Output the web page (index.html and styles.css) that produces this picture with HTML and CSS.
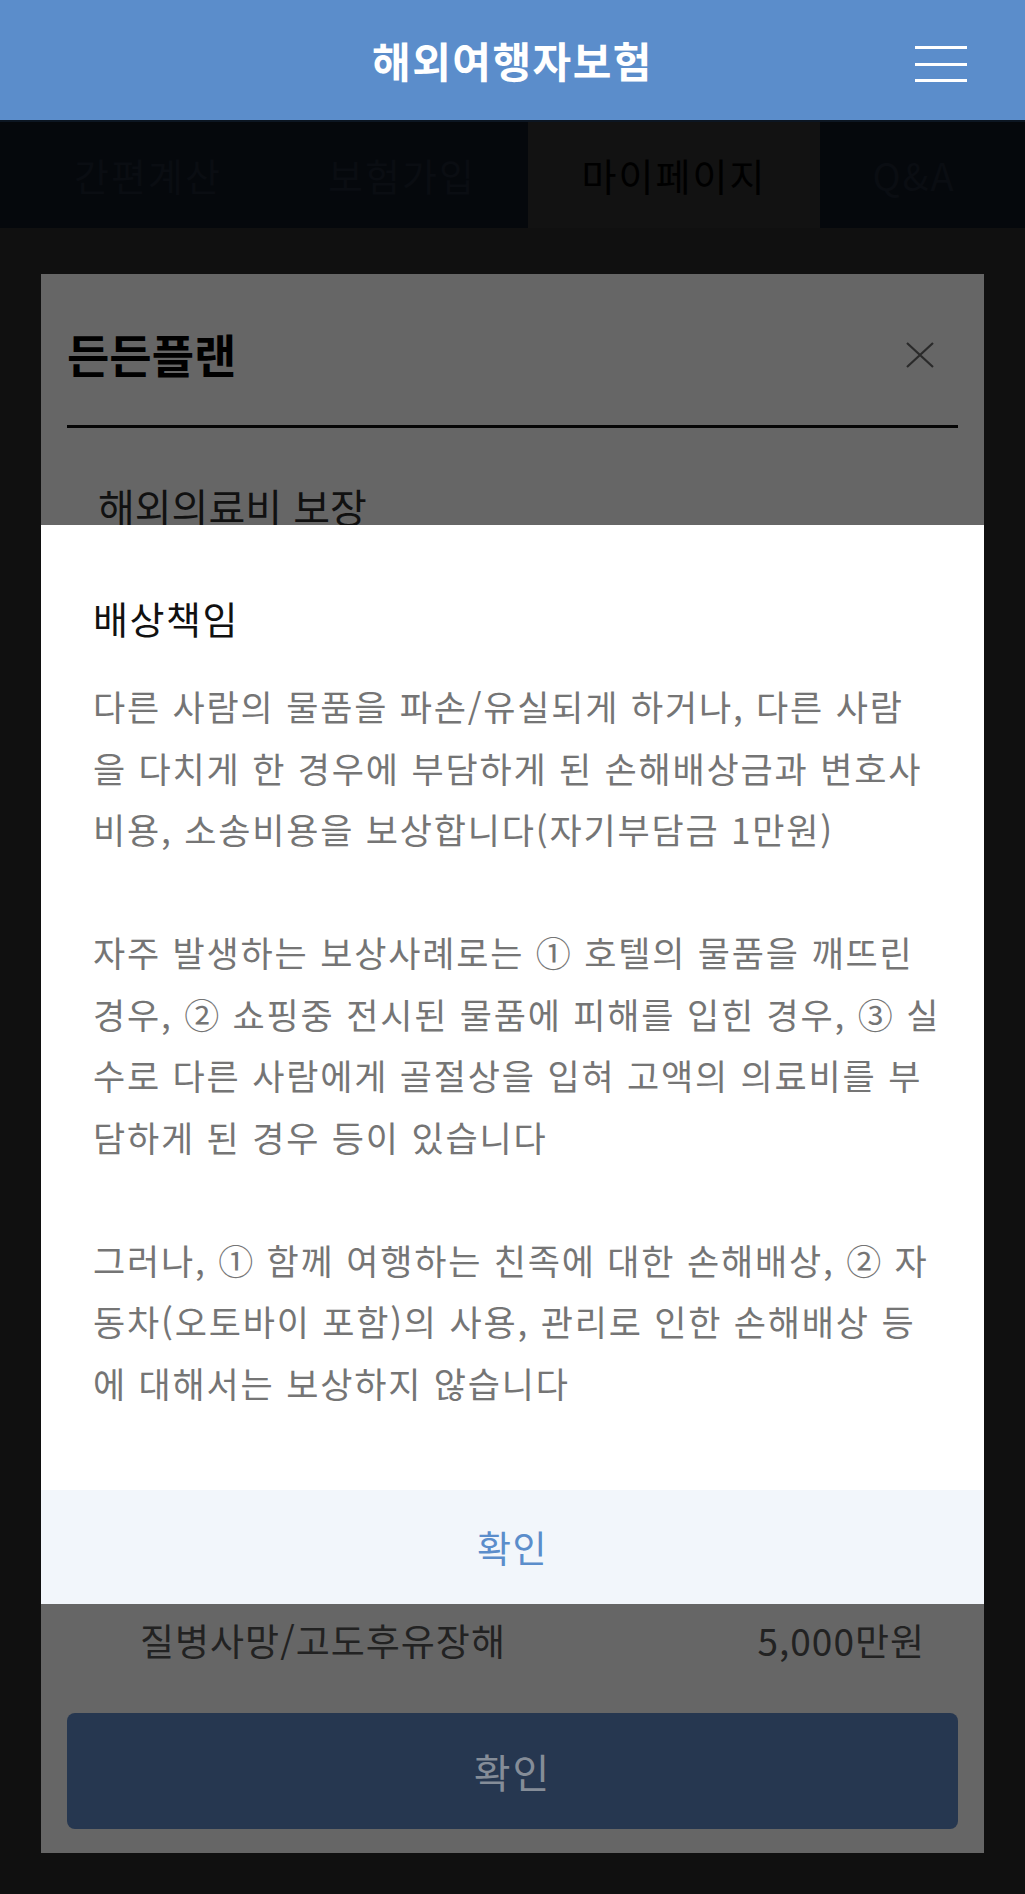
FILE: index.html
```html
<!DOCTYPE html>
<html lang="ko">
<head>
<meta charset="utf-8">
<title>해외여행자보험</title>
<link rel="stylesheet" href="styles.css">
</head>
<body>
<header class="appbar">
  <span></span>
  <h1 class="appbar-title">해외여행자보험</h1>
  <button class="menu-btn" aria-label="메뉴">
    <span class="menu-line"></span>
    <span class="menu-line"></span>
    <span class="menu-line"></span>
  </button>
</header>

<nav class="tabs">
  <a class="tab tab-1">간편계산</a>
  <a class="tab tab-2">보험가입</a>
  <a class="tab tab-3 active">마이페이지</a>
  <a class="tab tab-4">Q&amp;A</a>
</nav>

<main class="stage">
  <section class="sheet">
    <div class="sheet-head">
      <h2 class="sheet-title">든든플랜</h2>
      <button class="close-btn" aria-label="닫기">
        <svg width="28" height="26" viewBox="0 0 28 26"><path d="M1 1 L27 25 M27 1 L1 25" stroke="#2a2a2a" stroke-width="2.2" fill="none"/></svg>
      </button>
    </div>
    <div class="cover-group">해외의료비 보장</div>
    <div class="sheet-bottom">
      <div class="cover-row">
        <span>질병사망/고도후유장해</span>
        <span>5,000만원</span>
      </div>
      <button class="sheet-btn">확인</button>
    </div>
  </section>

  <div class="dialog">
    <div class="dialog-body">
      <h3 class="dialog-title">배상책임</h3>
      <p class="dialog-text">다른 사람의 물품을 파손/유실되게 하거나, 다른 사람<br>을 다치게 한 경우에 부담하게 된 손해배상금과 변호사<br>비용, 소송비용을 보상합니다(자기부담금 1만원)</p>
      <p class="dialog-text">자주 발생하는 보상사례로는 ① 호텔의 물품을 깨뜨린<br>경우, ② 쇼핑중 전시된 물품에 피해를 입힌 경우, ③ 실<br>수로 다른 사람에게 골절상을 입혀 고액의 의료비를 부<br>담하게 된 경우 등이 있습니다</p>
      <p class="dialog-text">그러나, ① 함께 여행하는 친족에 대한 손해배상, ② 자<br>동차(오토바이 포함)의 사용, 관리로 인한 손해배상 등<br>에 대해서는 보상하지 않습니다</p>
    </div>
    <button class="dialog-ok">확인</button>
  </div>
</main>
</body>
</html>
```

FILE: styles.css
```css
* { box-sizing: border-box; }

html, body {
  margin: 0;
  padding: 0;
}

body {
  width: 1025px;
  height: 1894px;
  overflow: hidden;
  background: #101010;
  font-family: "Noto Sans CJK KR", "Noto Sans", sans-serif;
}

button {
  font-family: inherit;
  border: none;
  background: none;
  padding: 0;
  cursor: pointer;
}

/* App bar */
.appbar {
  height: 120px;
  background: #5b8dcb;
  display: grid;
  grid-template-columns: 1fr auto 1fr;
  align-items: center;
}

.appbar-title {
  margin: 0;
  color: #ffffff;
  font-size: 42px;
  font-weight: 700;
  letter-spacing: 1.5px;
  line-height: 1;
}

.menu-btn {
  justify-self: end;
  margin-right: 58px;
  width: 52px;
  display: flex;
  flex-direction: column;
  gap: 13.5px;
  margin-top: 8px;
}

.menu-line {
  display: block;
  height: 3px;
  background: #ffffff;
}

/* Tabs */
.tabs {
  height: 108px;
  background: #05080c;
  border-top: 2px solid #0c1622;
  display: flex;
  padding-left: 20px;
}

.tab {
  display: flex;
  align-items: center;
  justify-content: center;
  font-family: "Noto Sans CJK KR", "Noto Sans", sans-serif;
  font-size: 38px;
  letter-spacing: 2px;
  color: #0a0d12;
  padding-bottom: 2px;
}

.tab-1 { width: 256px; }
.tab-2 { width: 252px; }
.tab-3 { width: 292px; }
.tab-4 { width: 188px; }

.tab.active {
  background: #121212;
  color: #000000;
}

/* Stage */
.stage {
  position: relative;
  padding: 46px 41px 0;
}

.sheet {
  height: 1579px;
  background: #666666;
  padding: 0 26px 24px;
  display: flex;
  flex-direction: column;
}

.sheet-head {
  display: flex;
  align-items: center;
  justify-content: space-between;
  padding: 49px 0 42px;
  border-bottom: 3px solid #050505;
}

.sheet-title {
  margin: 0;
  font-size: 46px;
  font-weight: 700;
  line-height: 60px;
  color: #000000;
}

.close-btn {
  margin-right: 24px;
  margin-top: 4px;
  display: flex;
}

.cover-group {
  margin-top: 50px;
  padding-left: 31px;
  font-size: 40px;
  line-height: 56px;
  color: #111111;
}

.sheet-bottom {
  margin-top: auto;
}

.cover-row {
  display: flex;
  justify-content: space-between;
  padding: 0 33px 0 73px;
  font-size: 37px;
  line-height: 50px;
  letter-spacing: 1px;
  color: #222222;
}

.sheet-btn {
  margin-top: 48px;
  width: 100%;
  height: 116px;
  border-radius: 8px;
  background: #263750;
  color: #858d98;
  font-size: 40px;
  letter-spacing: 2px;
}

/* Front dialog */
.dialog {
  position: absolute;
  top: 297px;
  left: 41px;
  width: 943px;
  height: 1079px;
  background: #ffffff;
  display: flex;
  flex-direction: column;
}

.dialog-body {
  flex: 1;
  padding: 68px 20px 0 52px;
}

.dialog-title {
  margin: 0 0 32px;
  font-size: 38px;
  font-weight: 400;
  letter-spacing: 1.5px;
  line-height: 50px;
  color: #111111;
}

.dialog-text {
  margin: 0;
  font-size: 35px;
  letter-spacing: 1.8px;
  line-height: 61.5px;
  color: #757575;
}

.dialog-text + .dialog-text {
  margin-top: 61.5px;
}

.dialog-ok {
  height: 114px;
  width: 100%;
  background: #f2f6fb;
  color: #5b8dcb;
  font-size: 37px;
  letter-spacing: 1.5px;
}
```
